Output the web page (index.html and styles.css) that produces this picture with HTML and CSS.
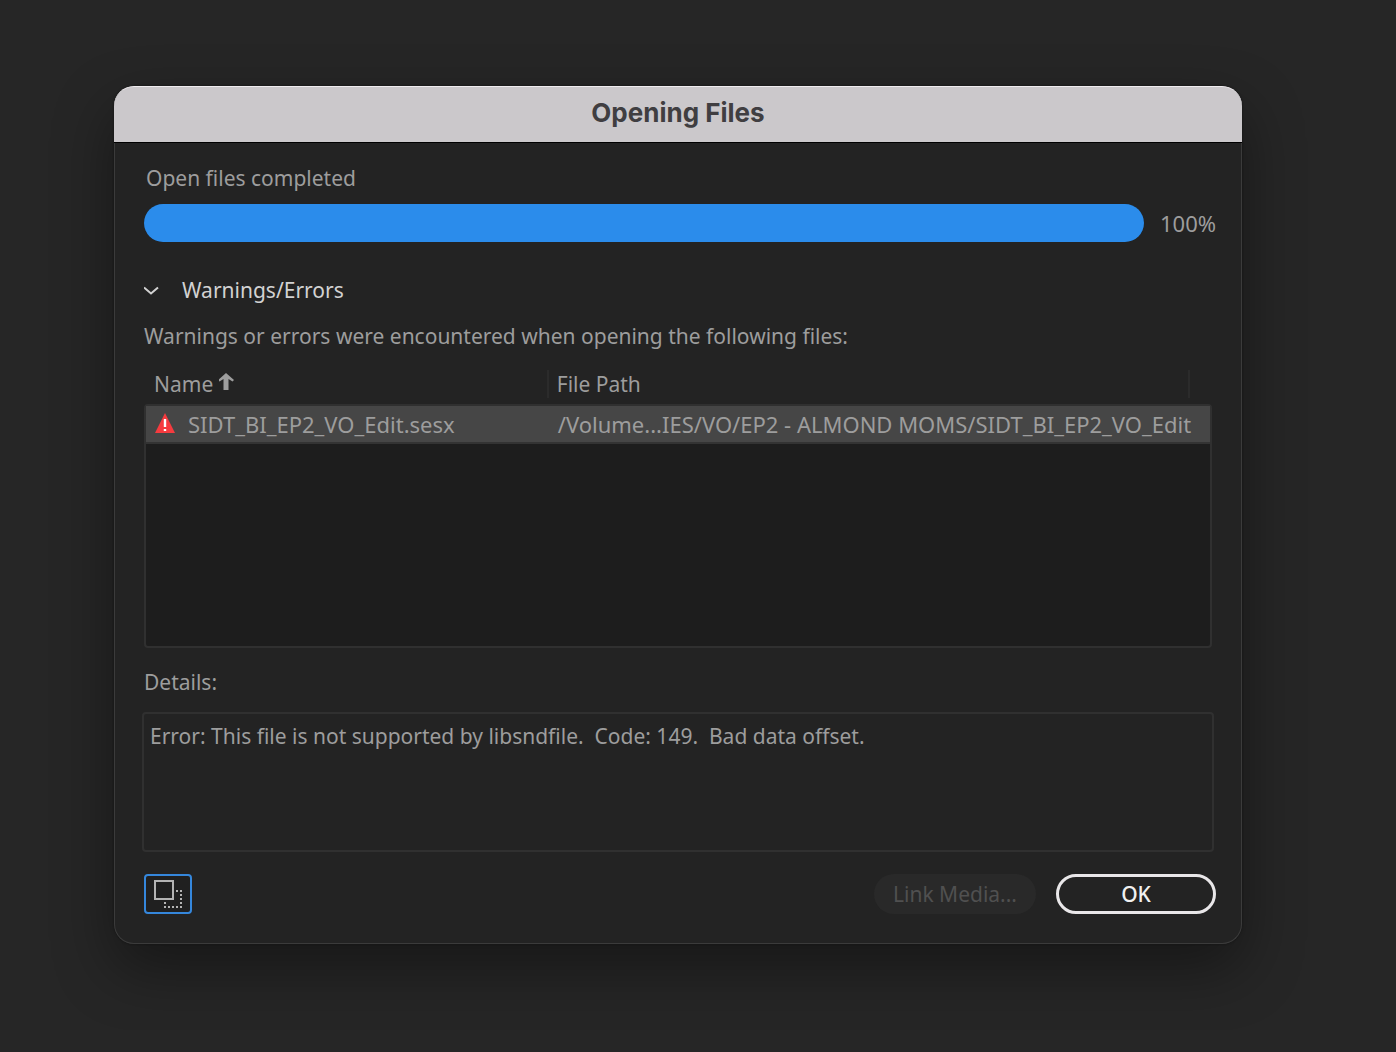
FILE: index.html
```html
<!DOCTYPE html>
<html lang="en">
<head>
  <meta charset="UTF-8">
  <meta name="viewport" content="width=device-width, initial-scale=1.0">
  <title>Opening Files</title>
  <link rel="stylesheet" href="styles.css">
</head>
<body>
  <main class="dialog" role="dialog" aria-labelledby="title">
    <header class="titlebar">
      <h1 id="title">Opening Files</h1>
    </header>

    <div class="content">
      <label class="status" for="progress">Open files completed</label>
      <div class="progress-row">
        <progress id="progress" value="100" max="100"></progress>
        <span class="percent">100%</span>
      </div>

      <button class="toggle" type="button" aria-expanded="true" aria-controls="warnings">
        <svg width="16" height="10" viewBox="0 0 16 10" aria-hidden="true">
          <path d="M0 2.500 7 8.500 14 2.500" fill="none" stroke="currentColor" stroke-width="2"/>
        </svg>
        Warnings/Errors
      </button>

      <section id="warnings">
        <p class="intro">Warnings or errors were encountered when opening the following files:</p>

        <table class="files">
          <thead>
            <tr>
              <th scope="col" aria-sort="ascending">Name
                <svg width="16" height="19" viewBox="1 0 16 19" aria-hidden="true">
                  <path d="M8 0 16 7 14.5 8.5 10.5 6V17H5.500V6L1.500 8.500 0 7Z" fill="currentColor"/>
                </svg>
              </th>
              <th scope="col">File Path</th>
              <td></td>
            </tr>
          </thead>
          <tbody>
            <tr class="selected">
              <td>
                <svg width="20" height="22" viewBox="0 0 20 22" role="img" aria-label="Error">
                  <path d="M10 0 20 20H0Z" fill="#f53b3f"/>
                  <path d="M10 6V14M10 16V18" stroke="#fff" stroke-width="2.400"/>
                </svg>
                SIDT_BI_EP2_VO_Edit.sesx
              </td>
              <td>/Volume...IES/VO/EP2 - ALMOND MOMS/SIDT_BI_EP2_VO_Edit</td>
            </tr>
          </tbody>
        </table>

        <label class="details-label" for="details">Details:</label>
        <textarea id="details" readonly>Error: This file is not supported by libsndfile.  Code: 149.  Bad data offset.</textarea>
      </section>

      <footer class="actions">
        <button class="icon-button" type="button" aria-label="Auto-size window">
          <svg width="30" height="30" viewBox="0 0 30 30" aria-hidden="true">
            <rect x="2" y="2" width="18" height="18" fill="none" stroke="#b4b4b4" stroke-width="2"/>
            <path d="M23 12h2M27 12h2M27 16h2M27 20h2M27 24h2M27 28h2M23 28h2M19 28h2M15 28h2M11 28h2M11 24h2" stroke="#b4b4b4" stroke-width="2"/>
          </svg>
        </button>
        <button class="link-media" type="button" disabled>Link Media...</button>
        <button class="ok" type="button">OK</button>
      </footer>
    </div>
  </main>
</body>
</html>
```

FILE: styles.css
```css
* {
  box-sizing: border-box;
}
body {
  margin: 0;
  padding: 86px 154px 86px 114px;
  background: #262626;
  color: #9d9d9d;
  font: 21px/28px "Noto Sans", sans-serif;
}
button, textarea {
  font: inherit;
  color: inherit;
}
svg {
  flex: none;
}
.dialog {
  background: #232323;
  border-radius: 20px;
  box-shadow: 0 0 2px #111, 0 24px 60px rgba(0, 0, 0, 0.4);
}
.titlebar {
  height: 57px;
  padding-top: 12px;
  background: #cbc8cb;
  border-top: 1px solid #efecef;
  border-bottom: 1px solid #000;
  border-radius: 20px 20px 0 0;
  text-align: center;
}
h1 {
  margin: 0;
  color: #403e41;
  font: 700 26px/28px Inter, sans-serif;
}
.content {
  padding: 21px 25px 29px 29px;
  border: 1px solid #3b3b3b;
  border-top: 0;
  border-radius: 0 0 20px 20px;
}
.status {
  display: block;
  padding-left: 2px;
}
.progress-row {
  display: flex;
  align-items: center;
  gap: 16px;
  margin-top: 12px;
}
progress {
  flex: 1;
  height: 38px;
  border: 0;
  appearance: none;
}
progress::-webkit-progress-bar {
  background: #1b1b1b;
  border-radius: 19px;
}
progress::-webkit-progress-value {
  background: #2b8ceb;
  border-radius: 19px;
}
.percent {
  width: 56px;
  font-size: 22px;
}
.toggle {
  display: flex;
  align-items: center;
  gap: 22px;
  margin-top: 34px;
  padding: 0;
  border: 0;
  background: none;
  color: #d2d2d2;
}
#warnings {
  padding-right: 4px;
}
.intro {
  margin: 18px 0 20px;
}
.files, .files tbody {
  display: block;
}
.files tr {
  display: grid;
  grid-template-columns: 5fr 8fr 22px;
}
.files th, .files td {
  padding: 0;
  white-space: nowrap;
}
.files thead {
  display: block;
  padding: 0 2px;
}
.files th {
  padding-left: 8px;
  font-weight: 400;
  text-align: left;
}
.files thead tr > * + * {
  border-left: 2px solid #2b2b2b;
}
.files tbody {
  height: 244px;
  margin-top: 6px;
  border: 2px solid #303030;
  border-radius: 4px;
  background: #1d1d1d;
  font-size: 22px;
}
.selected {
  height: 38px;
  align-items: center;
  background: #464646;
  border-bottom: 2px solid #333;
}
.selected td:first-child {
  display: flex;
  align-items: center;
  gap: 13px;
  padding-left: 9px;
}
.selected td:last-child {
  grid-column: 2 / 4;
  padding-left: 11px;
}
.details-label {
  display: block;
  margin: 20px 0 16px;
}
textarea {
  display: block;
  width: calc(100% + 4px);
  height: 140px;
  margin: 0 -2px;
  padding: 8px 6px;
  border: 2px solid #303030;
  border-radius: 4px;
  background: none;
  resize: none;
}
.actions {
  display: flex;
  gap: 20px;
  margin-top: 22px;
}
.actions button {
  height: 40px;
  padding: 0;
  border-radius: 20px;
}
.actions .icon-button {
  display: flex;
  align-items: center;
  justify-content: center;
  width: 48px;
  margin-right: auto;
  border: 2px solid #3587dc;
  border-radius: 4px;
  background: #202020;
}
.link-media {
  width: 162px;
  border: 0;
  background: #292929;
  color: #505050;
}
.ok {
  width: 160px;
  border: 3px solid #e9e7e9;
  background: none;
  color: #f0f0f0;
  font-weight: 500;
}
```
